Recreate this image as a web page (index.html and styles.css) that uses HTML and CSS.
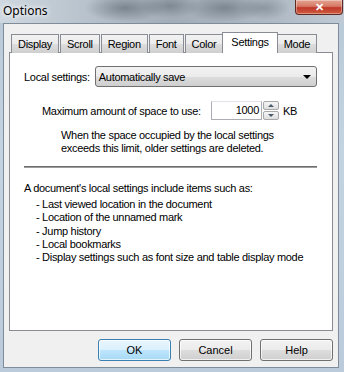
FILE: index.html
```html
<!DOCTYPE html>
<html lang="en">
  <head>
    <meta charset="UTF-8" />
    <title>Options</title>
    <link rel="stylesheet" href="styles.css">
  </head>
  <body>
    <div class="window">
      <!-- Title bar -->
      <div class="titlebar">
        <span class="title">Options</span>
        <div class="close">&#x2715;</div>
      </div>

      <div class="client">
        <!-- Tabs -->
        <ul class="tabs">
          <li>Display</li>
          <li>Scroll</li>
          <li>Region</li>
          <li>Font</li>
          <li>Color</li>
          <li class="active">Settings</li>
          <li>Mode</li>
        </ul>

        <div class="panel">
          <div class="row">
            <label>Local settings:</label>
            <div class="combo">
              <span>Automatically save</span>
              <span class="arrow"></span>
            </div>
          </div>

          <div class="space-row">
            <label>Maximum amount of space to use:</label>
            <div class="number">1000</div>
            <div class="spin">
              <div class="spin-btn"><span class="up"></span></div>
              <div class="spin-btn"><span class="down"></span></div>
            </div>
            <span class="unit">KB</span>
          </div>

          <p class="note">
            When the space occupied by the local settings<br>
            exceeds this limit, older settings are deleted.
          </p>

          <hr class="sep">

          <p class="intro">A document's local settings include items such as:</p>
          <ul class="items">
            <li>- Last viewed location in the document</li>
            <li>- Location of the unnamed mark</li>
            <li>- Jump history</li>
            <li>- Local bookmarks</li>
            <li>- Display settings such as font size and table display mode</li>
          </ul>
        </div>

        <!-- Dialog buttons -->
        <div class="buttons">
          <button class="btn default">OK</button>
          <button class="btn">Cancel</button>
          <button class="btn">Help</button>
        </div>
      </div>
    </div>
  </body>
</html>
```

FILE: styles.css
```css
* {
  margin: 0;
  padding: 0;
  box-sizing: border-box;
}

body {
  width: 344px;
  height: 372px;
  overflow: hidden;
  font-family: "Liberation Sans", Arial, sans-serif;
  font-size: 11px;
  letter-spacing: -0.3px;
  color: #000;
}

.window {
  width: 344px;
  height: 372px;
  display: flex;
  flex-direction: column;
  background: linear-gradient(to bottom, #b9c8d6 0%, #c4d3e2 40%, #bccbdb 100%);
}

/* blurry aero glass behind the caption */
.titlebar {
  height: 23px;
  display: flex;
  justify-content: space-between;
  align-items: flex-start;
  background:
    radial-gradient(ellipse 40px 14px at 125px 8px, rgba(80, 90, 100, 0.55), transparent),
    radial-gradient(ellipse 30px 12px at 170px 6px, rgba(90, 100, 110, 0.5), transparent),
    radial-gradient(ellipse 40px 14px at 225px 8px, rgba(80, 90, 100, 0.5), transparent),
    radial-gradient(ellipse 25px 12px at 265px 8px, rgba(100, 110, 120, 0.45), transparent),
    linear-gradient(to right, #cfd8e0 0%, #b8c2cc 25%, #a3adb7 50%, #b0bac4 80%, #c0cad4 100%);
}

.title {
  font-family: "Noto Sans", sans-serif;
  font-size: 12px;
  letter-spacing: 0;
  padding: 2px 0 0 3px;
  color: #000;
  text-shadow: 0 0 6px #fff, 0 0 4px #fff;
}

.close {
  width: 48px;
  height: 15px;
  margin-right: 1px;
  border: 1px solid #5e2a22;
  border-top: none;
  border-radius: 0 0 4px 4px;
  background: linear-gradient(to bottom, #e4a392 0%, #d67965 45%, #c0382a 55%, #cf5c3e 100%);
  color: #fff;
  font-size: 11px;
  font-weight: bold;
  text-align: center;
  line-height: 14px;
  box-shadow: inset 0 0 0 1px rgba(255, 255, 255, 0.35);
}

.client {
  flex: 1;
  margin: 0 5px 4px 3px;
  border: 1px solid #7f8c99;
  background-color: #f0f0f0;
  padding: 8px 5px 6px 5px;
  display: flex;
  flex-direction: column;
}

.tabs {
  list-style: none;
  display: flex;
  align-items: flex-end;
  height: 21px;
  margin: 0 0 -1px 2px;
  position: relative;
  z-index: 1;
}

.tabs li {
  height: 19px;
  padding: 0 6px;
  margin-right: 1px;
  border: 1px solid #898c95;
  border-bottom: none;
  background: linear-gradient(to bottom, #f2f2f2 0%, #ebebeb 50%, #dddddd 51%, #cfcfcf 100%);
  line-height: 18px;
}

.tabs li.active {
  height: 21px;
  margin: 0 -1px 0 -2px;
  padding: 0 8px;
  background: #fff;
  line-height: 18px;
}

.panel {
  flex: 1;
  background: #fff;
  border: 1px solid #898c95;
  padding: 13px 15px 0 14px;
}

.row {
  display: flex;
  align-items: center;
  gap: 5px;
}

.combo {
  flex: 1;
  height: 21px;
  border: 1px solid #707070;
  border-radius: 3px;
  background: linear-gradient(to bottom, #f2f2f2 0%, #ebebeb 50%, #dddddd 51%, #cfcfcf 100%);
  display: flex;
  justify-content: space-between;
  align-items: center;
  padding: 0 5px 0 3px;
}

.arrow {
  width: 0;
  height: 0;
  border-left: 4px solid transparent;
  border-right: 4px solid transparent;
  border-top: 4px solid #000;
}

.space-row {
  display: flex;
  align-items: center;
  margin: 14px 0 0 18px;
}

.space-row label {
  width: 169px;
  white-space: nowrap;
}

.number {
  width: 51px;
  height: 19px;
  border: 1px solid #abadb3;
  border-top-color: #e2e3ea;
  text-align: right;
  padding-right: 2px;
  line-height: 17px;
}

.spin {
  display: flex;
  flex-direction: column;
  gap: 1px;
  margin-left: 1px;
}

.spin-btn {
  width: 16px;
  height: 9px;
  border: 1px solid #a8a8a8;
  border-radius: 2px;
  background: linear-gradient(to bottom, #f6f6f6, #dedede);
  display: flex;
  justify-content: center;
  align-items: center;
}

.up,
.down {
  width: 0;
  height: 0;
  border-left: 3px solid transparent;
  border-right: 3px solid transparent;
}

.up {
  border-bottom: 3px solid #4b5a6d;
}

.down {
  border-top: 3px solid #4b5a6d;
}

.unit {
  margin-left: 4px;
}

.note {
  margin: 9px 0 0 37px;
  line-height: 13px;
}

.sep {
  border: none;
  border-top: 1px solid #6e6e6e;
  border-bottom: 1px solid #9c9c9c;
  margin: 11px 0 0 0;
}

.intro {
  margin-top: 14px;
  line-height: 13px;
}

.items {
  list-style: none;
  margin: 3px 0 0 12px;
  line-height: 13.3px;
}

.buttons {
  display: flex;
  justify-content: flex-end;
  gap: 8px;
  margin-top: 8px;
}

.btn {
  width: 73px;
  height: 22px;
  border: 1px solid #707070;
  border-radius: 3px;
  background: linear-gradient(to bottom, #f2f2f2 0%, #ebebeb 50%, #dddddd 51%, #cfcfcf 100%);
  font-family: "Liberation Sans", Arial, sans-serif;
  font-size: 11px;
  color: #000;
  box-shadow: inset 0 0 0 1px rgba(255, 255, 255, 0.7);
}

.btn.default {
  border-color: #3c7fb1;
  background: linear-gradient(to bottom, #eaf6fd 0%, #d9f0fc 50%, #bee6fd 51%, #a7d9f5 100%);
}
```
